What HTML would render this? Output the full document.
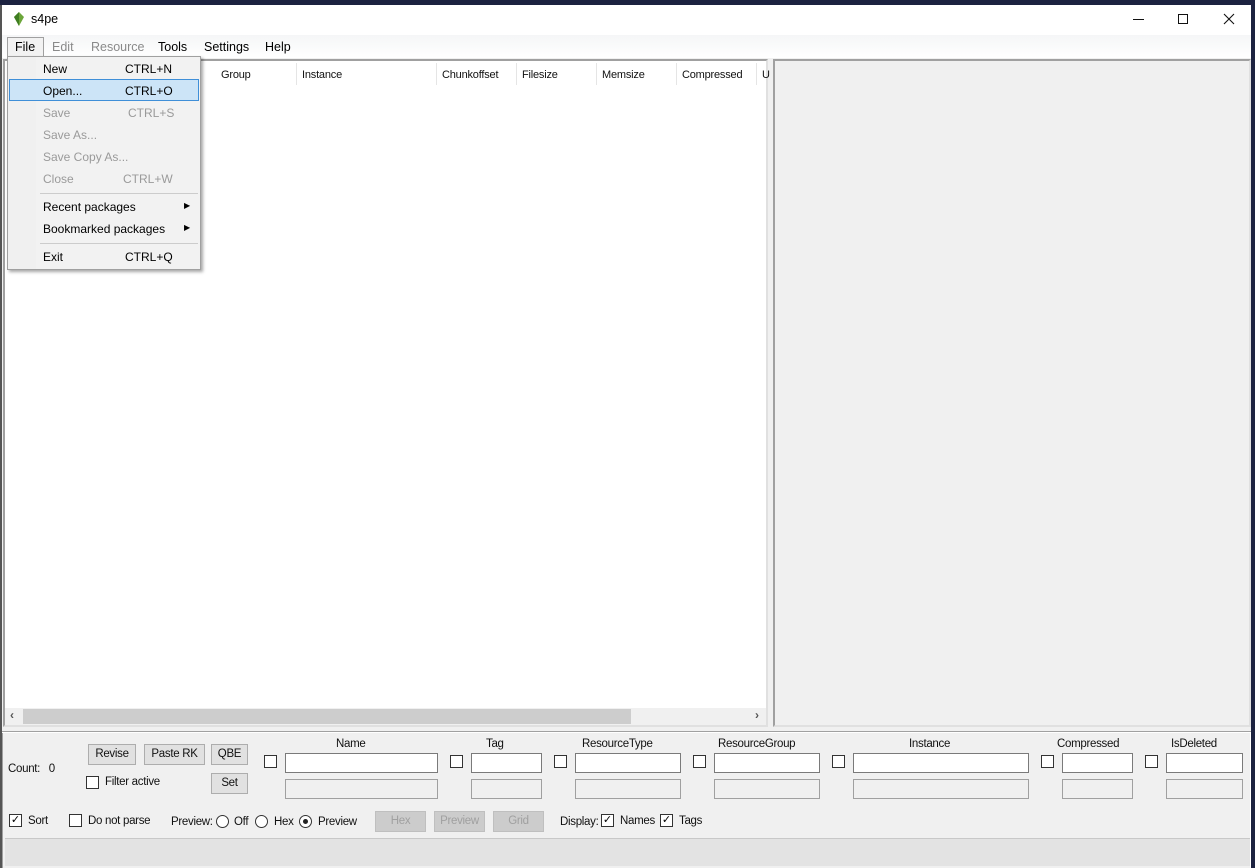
<!DOCTYPE html>
<html><head><meta charset="utf-8"><style>
*{box-sizing:border-box;margin:0;padding:0}
body{width:1255px;height:868px;overflow:hidden;background:#1c2240;font-family:"Liberation Sans",sans-serif;position:relative}
.a{position:absolute}
.win{left:0;top:5px;width:1251px;height:863px;background:#f0f0f0;border-left:2px solid #555}
.title{left:0;top:0;width:1249px;height:30px;background:#fff}
.menu{left:0;top:30px;width:1249px;height:23px;background:linear-gradient(#f5f6f7,#fff);font-size:12.5px}
.menu span{position:absolute;top:5px}
.list{left:1px;top:54px;width:765px;height:668px;background:#fff;border:2px solid #a0a0a0;border-right-color:#e0e0e0;border-bottom-color:#e0e0e0}
.hdr{font-size:11px;color:#111;top:8px;position:absolute;letter-spacing:-0.2px}
.sep{position:absolute;top:2px;width:1px;height:22px;background:#e5e5e5}
.right{left:771px;top:54px;width:478px;height:668px;background:#f0f0f0;border:2px solid #a0a0a0;border-right-color:#e0e0e0;border-bottom-color:#e0e0e0}
.t{font-size:11.5px;color:#111;letter-spacing:-0.3px;position:absolute}
.btn{position:absolute;background:#e1e1e1;border:1px solid #adadad;font-size:11.5px;text-align:center;letter-spacing:-0.3px;color:#111}
.dis{color:#a0a0a0;background:#ccc;border-color:#bfbfbf}
.cb{position:absolute;width:13px;height:13px;border:1px solid #333;background:#fff}
.in{position:absolute;height:20px;background:#fff;border:1px solid #7a7a7a}
.in2{position:absolute;height:20px;background:#f0f0f0;border:1px solid #a0a0a0}
.rad{position:absolute;width:13px;height:13px;border:1px solid #333;border-radius:50%;background:#fff}
.dd{left:5px;top:51px;width:194px;height:214px;background:#f2f2f2;border:1px solid #a0a0a0;box-shadow:2px 2px 3px rgba(0,0,0,.35);font-size:12px}
.dd span{position:absolute}
.g{color:#9a9a9a}
</style></head><body>
<div class="a win">
 <div class="a title">
  <svg class="a" style="left:10px;top:7px" width="14" height="14" viewBox="0 0 14 14"><polygon points="7,0 12,5 7,14 2,5" fill="#6ca63a"/><polygon points="7,0 7,14 2,5" fill="#3f7d22"/></svg>
  <span class="a" style="left:29px;top:7px;font-size:12.5px">s4pe</span>
  <div class="a" style="left:1131px;top:14px;width:11px;height:1px;background:#111"></div>
  <div class="a" style="left:1176px;top:9px;width:10px;height:10px;border:1px solid #111"></div>
  <svg class="a" style="left:1221px;top:8px" width="12" height="12"><path d="M1 1L11 11M11 1L1 11" stroke="#111" stroke-width="1.1"/></svg>
 </div>
 <div class="a menu">
  <div class="a" style="left:5px;top:2px;width:37px;height:21px;border:1px solid #a0a0a0;border-bottom:none;background:#f2f2f2"></div>
  <span style="left:13px">File</span><span style="left:50px;color:#8a8a8a">Edit</span><span style="left:89px;color:#8a8a8a">Resource</span><span style="left:156px">Tools</span><span style="left:202px">Settings</span><span style="left:263px">Help</span>
 </div>
 <div class="a list">
  <span class="hdr" style="left:216px">Group</span><div class="sep" style="left:291px"></div>
  <span class="hdr" style="left:297px">Instance</span><div class="sep" style="left:431px"></div>
  <span class="hdr" style="left:437px">Chunkoffset</span><div class="sep" style="left:511px"></div>
  <span class="hdr" style="left:517px">Filesize</span><div class="sep" style="left:591px"></div>
  <span class="hdr" style="left:597px">Memsize</span><div class="sep" style="left:671px"></div>
  <span class="hdr" style="left:677px">Compressed</span><div class="sep" style="left:751px"></div>
  <span class="hdr" style="left:757px">U</span>
  <div class="a" style="left:0;top:647px;width:761px;height:17px;background:#f0f0f0"></div>
  <div class="a" style="left:18px;top:648px;width:608px;height:15px;background:#cdcdcd"></div>
  <span class="a" style="left:5px;top:647px;font-size:12px;font-weight:bold;color:#555">‹</span>
  <span class="a" style="left:750px;top:647px;font-size:12px;font-weight:bold;color:#555">›</span>
 </div>
 <div class="a right"></div>
 <div class="a" style="left:0;top:726px;width:1249px;height:2px;border-top:1px solid #a0a0a0;background:#fff"></div>
 <div class="a" style="left:0;top:728px;width:1249px;height:135px;border-left:1px solid #a0a0a0;border-right:1px solid #fff"></div>

 <span class="t" style="left:6px;top:758px">Count:&nbsp;&nbsp;&nbsp;0</span>
 <div class="btn" style="left:86px;top:739px;width:48px;height:21px;line-height:19px">Revise</div>
 <div class="btn" style="left:142px;top:739px;width:61px;height:21px;line-height:19px">Paste RK</div>
 <div class="btn" style="left:209px;top:739px;width:37px;height:21px;line-height:19px">QBE</div>
 <div class="btn" style="left:209px;top:768px;width:37px;height:21px;line-height:19px">Set</div>
 <div class="cb" style="left:84px;top:771px"></div><span class="t" style="left:103px;top:771px">Filter active</span>

 <span class="t" style="left:334px;top:733px">Name</span>
 <div class="cb" style="left:262px;top:750px"></div><div class="in" style="left:283px;top:748px;width:153px"></div><div class="in2" style="left:283px;top:774px;width:153px"></div>
 <span class="t" style="left:484px;top:733px">Tag</span>
 <div class="cb" style="left:448px;top:750px"></div><div class="in" style="left:469px;top:748px;width:71px"></div><div class="in2" style="left:469px;top:774px;width:71px"></div>
 <span class="t" style="left:580px;top:733px">ResourceType</span>
 <div class="cb" style="left:552px;top:750px"></div><div class="in" style="left:573px;top:748px;width:106px"></div><div class="in2" style="left:573px;top:774px;width:106px"></div>
 <span class="t" style="left:716px;top:733px">ResourceGroup</span>
 <div class="cb" style="left:691px;top:750px"></div><div class="in" style="left:712px;top:748px;width:106px"></div><div class="in2" style="left:712px;top:774px;width:106px"></div>
 <span class="t" style="left:907px;top:733px">Instance</span>
 <div class="cb" style="left:830px;top:750px"></div><div class="in" style="left:851px;top:748px;width:176px"></div><div class="in2" style="left:851px;top:774px;width:176px"></div>
 <span class="t" style="left:1055px;top:733px">Compressed</span>
 <div class="cb" style="left:1039px;top:750px"></div><div class="in" style="left:1060px;top:748px;width:71px"></div><div class="in2" style="left:1060px;top:774px;width:71px"></div>
 <span class="t" style="left:1169px;top:733px">IsDeleted</span>
 <div class="cb" style="left:1143px;top:750px"></div><div class="in" style="left:1164px;top:748px;width:77px"></div><div class="in2" style="left:1164px;top:774px;width:77px"></div>

 <div class="cb" style="left:7px;top:809px;font-size:11px;line-height:10px;text-align:center">✓</div><span class="t" style="left:26px;top:810px">Sort</span>
 <div class="cb" style="left:67px;top:809px"></div><span class="t" style="left:86px;top:810px">Do not parse</span>
 <span class="t" style="left:169px;top:811px">Preview:</span>
 <div class="rad" style="left:214px;top:810px"></div><span class="t" style="left:232px;top:811px">Off</span>
 <div class="rad" style="left:253px;top:810px"></div><span class="t" style="left:272px;top:811px">Hex</span>
 <div class="rad" style="left:297px;top:810px"><div class="a" style="left:3px;top:3px;width:5px;height:5px;border-radius:50%;background:#222"></div></div><span class="t" style="left:316px;top:811px">Preview</span>
 <div class="btn dis" style="left:373px;top:806px;width:51px;height:21px;line-height:19px">Hex</div>
 <div class="btn dis" style="left:432px;top:806px;width:51px;height:21px;line-height:19px">Preview</div>
 <div class="btn dis" style="left:491px;top:806px;width:51px;height:21px;line-height:19px">Grid</div>
 <span class="t" style="left:558px;top:811px">Display:</span>
 <div class="cb" style="left:599px;top:809px;font-size:11px;line-height:10px;text-align:center">✓</div><span class="t" style="left:618px;top:810px">Names</span>
 <div class="cb" style="left:658px;top:809px;font-size:11px;line-height:10px;text-align:center">✓</div><span class="t" style="left:677px;top:810px">Tags</span>
 <div class="a" style="left:3px;top:833px;width:1245px;height:28px;background:#e3e3e3;border-top:1px solid #c8c8c8"></div>

 <div class="a dd">
  <div class="a" style="left:0;top:0;width:28px;height:212px;background:#f0f0f0"></div>
  <div class="a" style="left:1px;top:22px;width:190px;height:22px;background:#cce4f7;border:1px solid #3f8fd8"></div>
  <span style="left:35px;top:5px">New</span><span style="left:117px;top:5px">CTRL+N</span>
  <span style="left:35px;top:27px">Open...</span><span style="left:117px;top:27px">CTRL+O</span>
  <span class="g" style="left:35px;top:49px">Save</span><span class="g" style="left:120px;top:49px">CTRL+S</span>
  <span class="g" style="left:35px;top:71px">Save As...</span>
  <span class="g" style="left:35px;top:93px">Save Copy As...</span>
  <span class="g" style="left:35px;top:115px">Close</span><span class="g" style="left:115px;top:115px">CTRL+W</span>
  <div class="a" style="left:32px;top:136px;width:158px;height:1px;background:#ccc"></div>
  <span style="left:35px;top:143px">Recent packages</span><span style="left:176px;top:144px;font-size:8px">▶</span>
  <span style="left:35px;top:165px">Bookmarked packages</span><span style="left:176px;top:166px;font-size:8px">▶</span>
  <div class="a" style="left:32px;top:186px;width:158px;height:1px;background:#ccc"></div>
  <span style="left:35px;top:193px">Exit</span><span style="left:117px;top:193px">CTRL+Q</span>
 </div>
</div>
</body></html>
